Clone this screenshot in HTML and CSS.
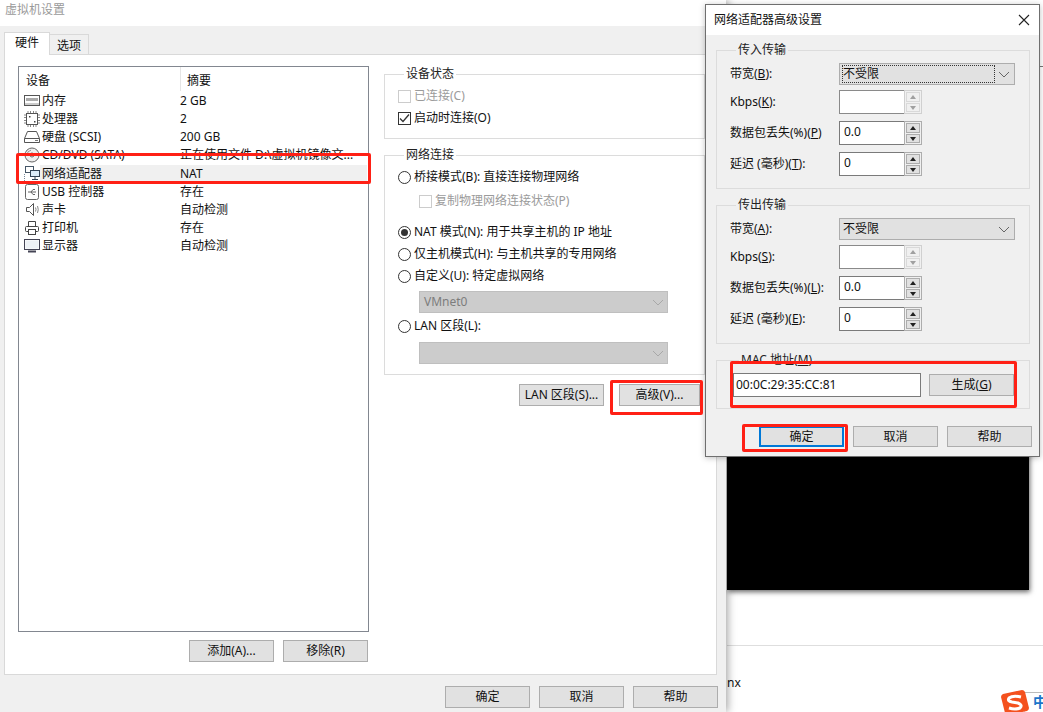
FILE: index.html
```html
<!DOCTYPE html>
<html lang="zh-CN">
<head>
    <meta charset="UTF-8">
    <title>虚拟机设置</title>
    <link rel="stylesheet" href="styles.css">
</head>
<body>
<div class="desktop">
    <!-- Things behind the windows -->
    <div class="black-box"></div>
    <div class="desk-line"></div>
    <div class="desk-edge"></div>
    <div class="desk-text">nx</div>
    <div class="ime">
        <svg class="ime-logo" width="30" height="26" viewBox="0 0 30 26">
            <path d="M3 5 L22 1 Q24 1 25 3 L29 19 Q29 21 27 22 L8 26 Q6 26 5 24 L1 8 Q1 6 3 5Z" fill="#f4511e"/>
            <path d="M21 8 Q13 6 9 9 Q7 12 12 13 L18 14 Q23 16 20 19 Q15 21 9 19" fill="none" stroke="#fff" stroke-width="3"/>
        </svg>
        <span class="ime-text">中</span>
    </div>

    <!-- Main settings window -->
    <div class="window">
        <div class="titlebar">虚拟机设置</div>
        <div class="tabs">
            <div class="tab active">硬件</div>
            <div class="tab">选项</div>
        </div>
        <div class="panel">
            <div class="left-col">
                <div class="tree">
                    <div class="tree-head">
                        <div class="col-a">设备</div>
                        <div class="col-b">摘要</div>
                    </div>
                    <div class="tree-row">
                        <svg class="icon" viewBox="0 0 16 16"><rect x="0.5" y="2.5" width="15" height="10" fill="#fff" stroke="#555"/><rect x="2" y="5" width="12" height="3" fill="#777"/><path d="M3 5v3M5 5v3M7 5v3M9 5v3M11 5v3M13 5v3" stroke="#ddd"/><path d="M1 11h14" stroke="#999"/></svg>
                        <span class="name">内存</span><span class="summary">2 GB</span>
                    </div>
                    <div class="tree-row">
                        <svg class="icon" viewBox="0 0 16 16"><path d="M4 0v16M6.500 0v16M9.500 0v16M12 0v16M0 4h16M0 6.500h16M0 9.500h16M0 12h16" stroke="#888"/><rect x="2.500" y="2.500" width="11" height="11" fill="#fff" stroke="#555"/><rect x="5" y="5" width="1.500" height="1.500" fill="#444"/><rect x="10" y="10" width="1.500" height="1.500" fill="#444"/></svg>
                        <span class="name">处理器</span><span class="summary">2</span>
                    </div>
                    <div class="tree-row">
                        <svg class="icon" viewBox="0 0 16 16"><path d="M3.500 2.500h9l3 7v4h-15v-4z" fill="#fff" stroke="#555"/><path d="M0.500 9.500h15" stroke="#555"/><path d="M11 11.500h3" stroke="#777"/></svg>
                        <span class="name">硬盘 (SCSI)</span><span class="summary">200 GB</span>
                    </div>
                    <div class="tree-row">
                        <svg class="icon" viewBox="0 0 16 16"><circle cx="8" cy="8" r="7" fill="#eee" stroke="#666"/><circle cx="8" cy="8" r="2" fill="#fff" stroke="#666"/><path d="M3 8a5 5 0 0 1 4-4.800" fill="none" stroke="#999"/></svg>
                        <span class="name">CD/DVD (SATA)</span><span class="summary">正在使用文件 D:\虚拟机镜像文...</span>
                    </div>
                    <div class="tree-row selected">
                        <svg class="icon" viewBox="0 0 16 16"><rect x="1.500" y="0.500" width="8" height="6" fill="#fff" stroke="#456"/><rect x="6.500" y="4.500" width="9" height="6" fill="#dcecf8" stroke="#345"/><path d="M11 11v2M8 13.500h6" stroke="#345"/><path d="M0.500 8v7.500h6" fill="none" stroke="#789" stroke-dasharray="1 1"/></svg>
                        <span class="name">网络适配器</span><span class="summary">NAT</span>
                    </div>
                    <div class="tree-row">
                        <svg class="icon" viewBox="0 0 16 16"><rect x="1.500" y="0.500" width="13" height="15" rx="2" fill="#fff" stroke="#666"/><path d="M4 8h8M9 5.500h2M9 10.500h2M7 8l2-2.500M7 8l2 2.500" fill="none" stroke="#666"/></svg>
                        <span class="name">USB 控制器</span><span class="summary">存在</span>
                    </div>
                    <div class="tree-row">
                        <svg class="icon" viewBox="0 0 16 16"><path d="M2.500 5.500h3l4-4v12l-4-4h-3z" fill="#fff" stroke="#555"/><path d="M11.500 5.500q1 2 0 4M13.500 4q1.500 3.500 0 7" fill="none" stroke="#888"/></svg>
                        <span class="name">声卡</span><span class="summary">自动检测</span>
                    </div>
                    <div class="tree-row">
                        <svg class="icon" viewBox="0 0 16 16"><path d="M4.500 6V1.500h7V6" fill="#fff" stroke="#444"/><rect x="1.500" y="6.500" width="13" height="5" rx="1" fill="#fff" stroke="#444"/><rect x="4.500" y="9.500" width="7" height="5" fill="#fff" stroke="#444"/></svg>
                        <span class="name">打印机</span><span class="summary">存在</span>
                    </div>
                    <div class="tree-row">
                        <svg class="icon" viewBox="0 0 16 16"><rect x="0.500" y="1.500" width="15" height="10" fill="#fff" stroke="#445"/><rect x="1.500" y="2.500" width="13" height="8" fill="#eef2f6"/><path d="M4 13.500h8" stroke="#445" stroke-width="2"/></svg>
                        <span class="name">显示器</span><span class="summary">自动检测</span>
                    </div>
                </div>
                <div class="tree-buttons">
                    <button class="btn">添加(A)...</button>
                    <button class="btn">移除(R)</button>
                </div>
            </div>
            <div class="right-col">
                <fieldset class="group state-group">
                    <legend>设备状态</legend>
                    <div class="opt disabled"><span class="check"></span>已连接(C)</div>
                    <div class="opt">
                        <span class="check"><svg width="11" height="11" viewBox="0 0 11 11"><path d="M1 5.500l3 3 6-7" fill="none" stroke="#333" stroke-width="1.300"/></svg></span>启动时连接(O)
                    </div>
                </fieldset>
                <fieldset class="group net-group">
                    <legend>网络连接</legend>
                    <div class="opt"><span class="radio"></span>桥接模式(B): 直接连接物理网络</div>
                    <div class="opt sub disabled copy-state"><span class="check"></span>复制物理网络连接状态(P)</div>
                    <div class="opt nat-opt"><span class="radio on"></span>NAT 模式(N): 用于共享主机的 IP 地址</div>
                    <div class="opt"><span class="radio"></span>仅主机模式(H): 与主机共享的专用网络</div>
                    <div class="opt"><span class="radio"></span>自定义(U): 特定虚拟网络</div>
                    <div class="combo off vmnet">
                        <span>VMnet0</span>
                        <svg width="12" height="7" viewBox="0 0 12 7"><path d="M1 1l5 5 5-5" fill="none" stroke="#a8a8a8"/></svg>
                    </div>
                    <div class="opt lan-opt"><span class="radio"></span>LAN 区段(L):</div>
                    <div class="combo off lan-combo">
                        <span></span>
                        <svg width="12" height="7" viewBox="0 0 12 7"><path d="M1 1l5 5 5-5" fill="none" stroke="#a8a8a8"/></svg>
                    </div>
                </fieldset>
                <div class="net-buttons">
                    <button class="btn">LAN 区段(S)...</button>
                    <button class="btn adv">高级(V)...</button>
                </div>
            </div>
        </div>
        <div class="window-buttons">
            <button class="btn">确定</button>
            <button class="btn">取消</button>
            <button class="btn">帮助</button>
        </div>
    </div>

    <!-- Advanced dialog on top -->
    <div class="dialog">
        <div class="dialog-title">
            <span>网络适配器高级设置</span>
            <svg width="12" height="12" viewBox="0 0 12 12"><path d="M1 1l10 10M11 1L1 11" stroke="#222" stroke-width="1.100"/></svg>
        </div>
        <div class="dialog-body">
            <fieldset class="group traffic">
                <legend>传入传输</legend>
                <div class="row first">
                    <label>带宽(<u>B</u>):</label>
                    <div class="combo wide">
                        <span class="focus-text">不受限</span>
                        <svg width="12" height="7" viewBox="0 0 12 7"><path d="M1 1l5 5 5-5" fill="none" stroke="#666"/></svg>
                    </div>
                </div>
                <div class="row">
                    <label>Kbps(<u>K</u>):</label>
                    <div class="spin off"><input type="text" value=""><div class="spin-btns"><i class="up"></i><i class="dn"></i></div></div>
                </div>
                <div class="row">
                    <label>数据包丢失(%)(<u>P</u>)</label>
                    <div class="spin"><input type="text" value="0.0"><div class="spin-btns"><i class="up"></i><i class="dn"></i></div></div>
                </div>
                <div class="row">
                    <label>延迟 (毫秒)(<u>T</u>):</label>
                    <div class="spin"><input type="text" value="0"><div class="spin-btns"><i class="up"></i><i class="dn"></i></div></div>
                </div>
            </fieldset>
            <fieldset class="group traffic">
                <legend>传出传输</legend>
                <div class="row first">
                    <label>带宽(<u>A</u>):</label>
                    <div class="combo wide">
                        <span>不受限</span>
                        <svg width="12" height="7" viewBox="0 0 12 7"><path d="M1 1l5 5 5-5" fill="none" stroke="#666"/></svg>
                    </div>
                </div>
                <div class="row">
                    <label>Kbps(<u>S</u>):</label>
                    <div class="spin off"><input type="text" value=""><div class="spin-btns"><i class="up"></i><i class="dn"></i></div></div>
                </div>
                <div class="row">
                    <label>数据包丢失(%)(<u>L</u>):</label>
                    <div class="spin"><input type="text" value="0.0"><div class="spin-btns"><i class="up"></i><i class="dn"></i></div></div>
                </div>
                <div class="row">
                    <label>延迟 (毫秒)(<u>E</u>):</label>
                    <div class="spin"><input type="text" value="0"><div class="spin-btns"><i class="up"></i><i class="dn"></i></div></div>
                </div>
            </fieldset>
            <fieldset class="group mac">
                <legend>MAC 地址(<u>M</u>)</legend>
                <div class="mac-row">
                    <input class="mac-input" type="text" value="00:0C:29:35:CC:81">
                    <button class="btn">生成(<u>G</u>)</button>
                </div>
            </fieldset>
            <div class="dialog-buttons">
                <button class="btn default">确定</button>
                <button class="btn">取消</button>
                <button class="btn">帮助</button>
            </div>
        </div>
    </div>

    <!-- Red annotation boxes drawn over the screenshot -->
    <div class="mark mark-row"></div>
    <div class="mark mark-adv"></div>
    <div class="mark mark-mac"></div>
    <div class="mark mark-ok"></div>
</div>
</body>
</html>
```

FILE: styles.css
```css
/* Page and desktop */
html, body {
    margin: 0;
    padding: 0;
}

body {
    font-family: "Noto Sans", "Noto Sans CJK SC", sans-serif;
    font-size: 12px;
    line-height: 16px;
    color: #111;
}

.desktop {
    position: relative;
    width: 1043px;
    height: 712px;
    overflow: hidden;
    background: #fff;
}

.black-box {
    position: absolute;
    left: 727px;
    top: 300px;
    width: 302px;
    height: 290px;
    background: #000;
    box-shadow: 1px 2px 5px rgba(0, 0, 0, 0.6);
}

.desk-line {
    position: absolute;
    left: 727px;
    top: 645px;
    width: 316px;
    height: 1px;
    background: #dedede;
}

.desk-edge {
    position: absolute;
    left: 1039px;
    top: 66px;
    width: 4px;
    height: 1px;
    background: #777;
}

.desk-text {
    position: absolute;
    left: 727px;
    top: 675px;
}

.ime {
    position: absolute;
    left: 1000px;
    top: 689px;
    width: 43px;
    height: 23px;
}

.ime::before {
    content: "";
    position: absolute;
    left: 24px;
    top: 3px;
    width: 19px;
    height: 20px;
    border-top: 1px solid #bbb;
    border-left: 1px solid #ddd;
    box-sizing: border-box;
}

.ime-logo {
    position: absolute;
    left: 0;
    top: 0;
}

.ime-text {
    position: absolute;
    left: 33px;
    top: 5px;
    font-size: 14px;
    font-weight: bold;
    color: #1b75c9;
}

/* Main window */
.window {
    position: absolute;
    left: 0;
    top: 0;
    width: 726px;
    height: 712px;
    background: #f0f0f0;
    box-shadow: 2px 0 8px rgba(0, 0, 0, 0.35);
}

.titlebar {
    height: 26px;
    padding: 2px 0 0 5px;
    box-sizing: border-box;
    background: #fff;
    color: #9a9a9a;
}

.tabs {
    display: flex;
    align-items: flex-end;
    height: 29px;
    margin-left: 4px;
    position: relative;
    z-index: 1;
}

.tab {
    width: 38px;
    height: 19px;
    margin-bottom: 1px;
    border: 1px solid #d9d9d9;
    border-bottom: none;
    border-left: none;
    box-sizing: content-box;
    text-align: center;
    line-height: 22px;
}

.tab.active {
    width: 44px;
    height: 22px;
    margin-bottom: 0;
    background: #fff;
    border-left: 1px solid #d9d9d9;
    line-height: 20px;
}

.panel {
    display: flex;
    height: 621px;
    margin: -1px 9px 0 4px;
    padding: 11px 11px 0 13px;
    box-sizing: border-box;
    background: #fff;
    border: 1px solid #d9d9d9;
}

.left-col {
    width: 351px;
    flex: none;
}

/* Device list */
.tree {
    height: 566px;
    box-sizing: border-box;
    border: 1px solid #828790;
    background: #fff;
}

.tree-head {
    display: flex;
    height: 25px;
    line-height: 27px;
}

.col-a {
    width: 154px;
    padding-left: 7px;
    border-right: 1px solid #e5e5e5;
    margin-bottom: 1px;
}

.col-b {
    padding-left: 6px;
}

.tree-row {
    display: flex;
    align-items: center;
    height: 18.125px;
    padding-left: 5px;
    position: relative;
}

.tree-row .icon {
    width: 16px;
    height: 16px;
    flex: none;
}

.tree-row .name {
    width: 138px;
    flex: none;
    padding-left: 2px;
    white-space: nowrap;
}

.tree-row .summary {
    white-space: nowrap;
}

.tree-row.selected {
    background: linear-gradient(to right, #fff 21px, #f0f0f0 21px);
    margin-right: 1px;
}

.tree-buttons {
    display: flex;
    justify-content: flex-end;
    gap: 9px;
    margin: 8px 1px 0 0;
}

.right-col {
    width: 321px;
    margin-left: 15px;
    flex: none;
}

/* Group boxes */
.group {
    margin: 0;
    padding: 3px 0 0 13px;
    min-width: 0;
    border: 1px solid #dcdcdc;
}

.group legend {
    padding: 0 2px;
    margin-left: 6px;
    line-height: 16px;
    color: #222;
}

.state-group {
    padding-bottom: 9px;
}

.net-group {
    margin-top: 8px;
    padding-bottom: 10px;
}

.opt {
    display: flex;
    align-items: center;
    gap: 3px;
    height: 22px;
    white-space: nowrap;
}

.opt.disabled {
    color: #9b9b9b;
}

.opt.sub {
    padding-left: 21px;
}

.copy-state {
    margin-top: 2px;
}

.nat-opt {
    margin-top: 9px;
}

.lan-opt {
    margin-top: 2px;
}

.check {
    display: flex;
    align-items: center;
    justify-content: center;
    width: 13px;
    height: 13px;
    box-sizing: border-box;
    border: 1px solid #333;
    background: #fff;
}

.disabled .check {
    border-color: #ccc;
}

.radio {
    position: relative;
    width: 13px;
    height: 13px;
    box-sizing: border-box;
    border: 1px solid #333;
    border-radius: 50%;
    background: #fff;
}

.radio.on::after {
    content: "";
    position: absolute;
    left: 2px;
    top: 2px;
    width: 7px;
    height: 7px;
    border-radius: 50%;
    background: #333;
}

/* Dropdowns */
.combo {
    display: flex;
    align-items: center;
    justify-content: space-between;
    height: 22px;
    padding: 0 4px 0 3px;
    box-sizing: border-box;
    background: #e1e1e1;
    border: 1px solid #adadad;
}

.combo.off {
    width: 249px;
    margin-left: 21px;
    background: #ccc;
    border-color: #bfbfbf;
    color: #7d7d7d;
    padding: 0 3px 0 4px;
}

.vmnet {
    margin-top: 4px;
}

.lan-combo {
    margin-top: 5px;
}

.combo.wide {
    width: 176px;
}

.focus-text {
    width: 151px;
    height: 16px;
    outline: 1px dotted #333;
}

/* Buttons */
.btn {
    width: 85px;
    height: 22px;
    padding: 0;
    box-sizing: border-box;
    font-family: inherit;
    font-size: 12px;
    line-height: 16px;
    color: #111;
    background: #e1e1e1;
    border: 1px solid #adadad;
    border-radius: 0;
}

.btn u {
    text-underline-offset: 1px;
}

.net-buttons {
    display: flex;
    justify-content: flex-end;
    gap: 15px;
    margin-top: 9px;
    padding-right: 5px;
}

.btn.adv {
    width: 81px;
}

.window-buttons {
    display: flex;
    justify-content: flex-end;
    gap: 9px;
    margin-top: 11px;
    padding-right: 8px;
}

/* Advanced dialog */
.dialog {
    position: absolute;
    left: 705px;
    top: 4px;
    width: 335px;
    height: 453px;
    box-sizing: border-box;
    background: #f0f0f0;
    border: 1px solid #6f6f6f;
    box-shadow: 0 1px 6px rgba(0, 0, 0, 0.25);
}

.dialog-title {
    display: flex;
    align-items: center;
    justify-content: space-between;
    height: 30px;
    padding: 0 9px 0 8px;
    box-sizing: border-box;
    background: #fff;
}

.dialog-body {
    padding: 7px 9px 0 10px;
}

.traffic {
    padding-top: 5px;
    padding-bottom: 12px;
    margin-bottom: 8px;
}

.row {
    display: flex;
    align-items: center;
    margin-top: 7px;
}

.row.first {
    margin-top: 0;
}

.row.first + .row {
    margin-top: 5px;
}

.row label {
    width: 109px;
    flex: none;
    white-space: nowrap;
}

.spin {
    display: flex;
    width: 83px;
    height: 24px;
}

.spin input, .mac-input {
    font-family: inherit;
    font-size: 12px;
    color: #111;
    background: #fff;
    box-sizing: border-box;
    border: 1px solid #7a7a7a;
    border-radius: 0;
    outline: none;
}

.spin input {
    width: 65px;
    height: 24px;
    padding: 0 0 3px 4px;
    border-right: none;
}

.spin-btns {
    display: flex;
    flex-direction: column;
    gap: 1px;
    width: 18px;
    height: 24px;
    padding: 1px;
    box-sizing: border-box;
    border: 1px solid #adadad;
    background: #f0f0f0;
}

.spin-btns i {
    flex: 1;
    position: relative;
    background: #e1e1e1;
    border: 1px solid #adadad;
    box-sizing: border-box;
}

.spin-btns i::after {
    content: "";
    position: absolute;
    left: 3px;
    width: 0;
    height: 0;
    border-left: 3px solid transparent;
    border-right: 3px solid transparent;
}

.spin-btns .up::after {
    top: 2px;
    border-bottom: 4px solid #222;
}

.spin-btns .dn::after {
    top: 2px;
    border-top: 4px solid #222;
}

.spin.off input {
    border-color: #8a8a8a;
}

.spin.off .spin-btns {
    border-color: #d0d0d0;
}

.spin.off .spin-btns i {
    background: #f0f0f0;
    border-color: #d9d9d9;
}

.spin.off .up::after {
    border-bottom-color: #a0a0a0;
}

.spin.off .dn::after {
    border-top-color: #a0a0a0;
}

.mac {
    padding: 5px 0 11px 16px;
}

.mac-row {
    display: flex;
    align-items: center;
    gap: 8px;
}

.mac-input {
    width: 188px;
    height: 24px;
    padding: 0 0 2px 2px;
}

.dialog-buttons {
    display: flex;
    justify-content: flex-end;
    gap: 9px;
    margin: 17px -2px 0 0;
}

.dialog-buttons .btn {
    height: 21px;
}

.btn.default {
    border: 2px solid #0078d7;
}

/* Red annotation rectangles */
.mark {
    position: absolute;
    box-sizing: border-box;
    border: 3px solid #ff2015;
    border-radius: 2px;
}

.mark-row {
    left: 16px;
    top: 153px;
    width: 355px;
    height: 31px;
}

.mark-adv {
    left: 610px;
    top: 380px;
    width: 93px;
    height: 35px;
}

.mark-mac {
    left: 730px;
    top: 361px;
    width: 287px;
    height: 47px;
}

.mark-ok {
    left: 742px;
    top: 424px;
    width: 106px;
    height: 28px;
}
```
